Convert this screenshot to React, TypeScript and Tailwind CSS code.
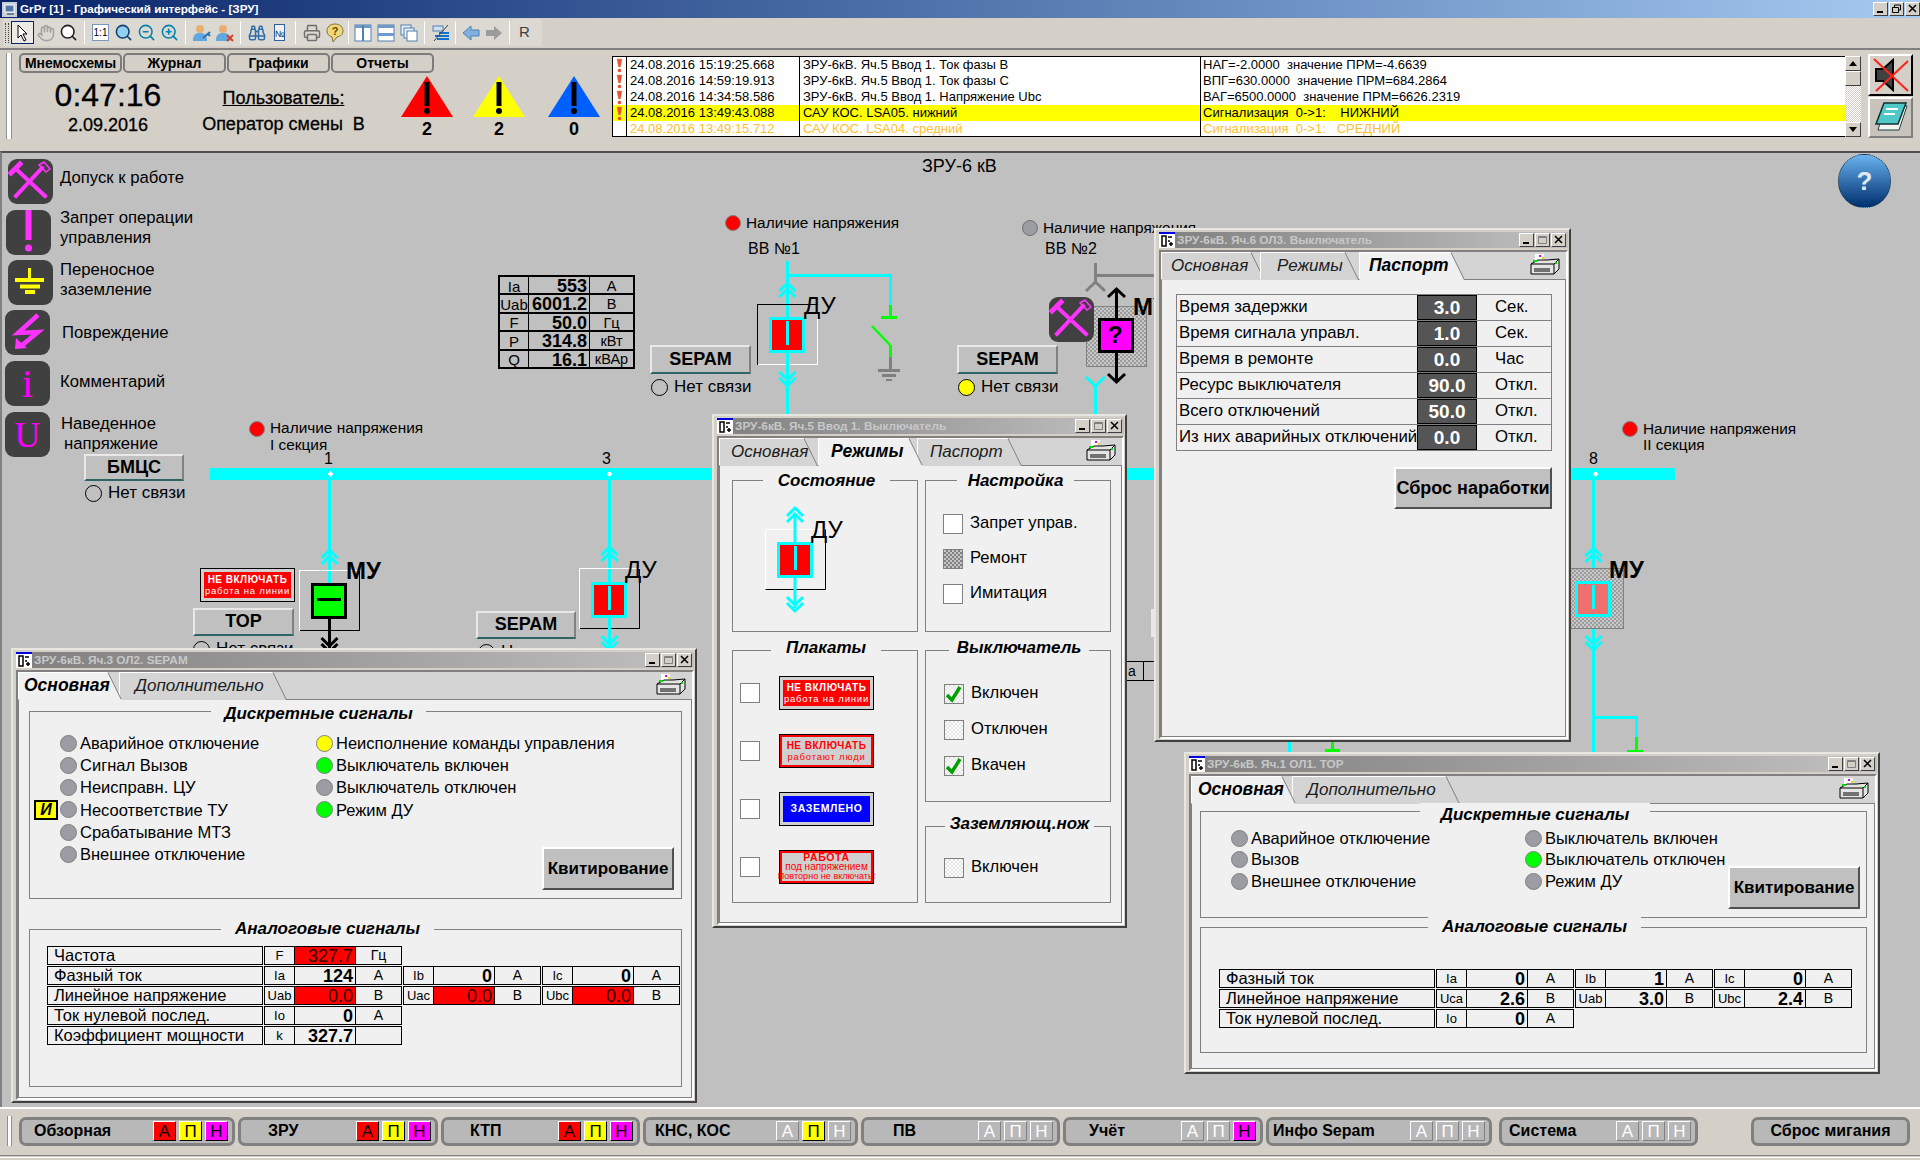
import type { ReactNode } from "react";
import { Binoculars, Hand, Printer, Search, ZoomIn, ZoomOut } from "lucide-react";

const CY = "#00ffff";

// ---------- schematic pieces (drawn in page coordinates) ----------
function Chevrons({ x, y, dir, color = CY }: { x: number; y: number; dir: "up" | "down"; color?: string }) {
  const d =
    dir === "up"
      ? `M${x - 8} ${y + 8} L${x} ${y} L${x + 8} ${y + 8} M${x - 8} ${y + 14} L${x} ${y + 6} L${x + 8} ${y + 14}`
      : `M${x - 8} ${y} L${x} ${y + 8} L${x + 8} ${y} M${x - 8} ${y + 6} L${x} ${y + 14} L${x + 8} ${y + 6}`;
  return <path d={d} fill="none" stroke={color} strokeWidth={3} />;
}

function Breaker({ x, y, fill = "#ff0000" }: { x: number; y: number; fill?: string }) {
  return (
    <g>
      <rect x={x + 1.5} y={y + 1.5} width={33} height={33} fill={fill} stroke={CY} strokeWidth={3} />
      <rect x={x + 17} y={y + 4} width={3} height={24} fill={CY} />
    </g>
  );
}

function Frame({ x, y, invert }: { x: number; y: number; invert?: boolean }) {
  const a = invert ? "#000000" : "#ffffff";
  const b = invert ? "#ffffff" : "#000000";
  return (
    <g fill="none" strokeWidth={1}>
      <path d={`M${x + 0.5} ${y + 60.5} V${y + 0.5} H${x + 60.5}`} stroke={a} />
      <path d={`M${x + 60.5} ${y + 0.5} V${y + 60.5} H${x + 0.5}`} stroke={b} />
    </g>
  );
}

function Node({ x }: { x: number }) {
  return <path d={`M${x} 471 L${x + 3} 474 L${x} 477 L${x - 3} 474 Z`} fill="#ffffff" />;
}

function Schematic() {
  return (
    <svg className="absolute left-0 top-[152px]" width={1920} height={955} viewBox="0 152 1920 955" shapeRendering="crispEdges">
      <rect x={210} y={468} width={1465} height={12} fill={CY} />

      {/* feeder 1 */}
      <rect x={328} y={480} width={3} height={103} fill={CY} />
      <g shapeRendering="auto"><Chevrons x={329.5} y={550} dir="up" /></g>
      <Frame x={299} y={570} />
      <rect x={311} y={583} width={36} height={36} fill="#000000" />
      <rect x={314} y={586} width={30} height={30} fill="#00ff00" />
      <rect x={317} y={598} width={24} height={3} fill="#000000" />
      <rect x={328} y={619} width={3} height={30} fill="#000000" />
      <g shapeRendering="auto"><Chevrons x={329.5} y={638} dir="down" color="#000000" /></g>
      <Node x={330} />

      {/* feeder 3 */}
      <rect x={608} y={480} width={3} height={102} fill={CY} />
      <g shapeRendering="auto"><Chevrons x={609.5} y={547} dir="up" /></g>
      <Frame x={579} y={568} />
      <Breaker x={591} y={582} />
      <rect x={608} y={618} width={3} height={31} fill={CY} />
      <g shapeRendering="auto"><Chevrons x={609.5} y={636} dir="down" /></g>
      <Node x={609} />

      {/* BB1 */}
      <rect x={786} y={261} width={3} height={56} fill={CY} />
      <rect x={786} y={274} width={106} height={3} fill={CY} />
      <rect x={889} y={274} width={3} height={32} fill={CY} />
      <rect x={889} y={305} width={3} height={12} fill="#00ff00" />
      <rect x={881} y={316} width={16} height={3} fill="#00ff00" />
      <path d="M872 326 L890 345" stroke="#00ff00" strokeWidth={2.5} shapeRendering="auto" />
      <rect x={889} y={345} width={3} height={12} fill="#00ff00" />
      <rect x={889} y={357} width={3} height={12} fill="#808080" />
      <rect x={878} y={369} width={22} height={3} fill="#808080" />
      <rect x={882} y={374} width={14} height={3} fill="#808080" />
      <rect x={886} y={379} width={6} height={2} fill="#808080" />
      <g shapeRendering="auto"><Chevrons x={787.5} y={283} dir="up" /></g>
      <Frame x={757} y={304} invert />
      <Breaker x={769} y={317} />
      <rect x={786} y={353} width={3} height={61} fill={CY} />
      <g shapeRendering="auto"><Chevrons x={787.5} y={372} dir="down" /></g>

      {/* BB2 */}
      <rect x={1094} y={263} width={3} height={21} fill="#808080" />
      <rect x={1094} y={274} width={60} height={3} fill="#808080" />
      <path d="M1086 291 L1095.5 282 L1105 291" fill="none" stroke="#808080" strokeWidth={3} shapeRendering="auto" />
      <rect x={1086} y={306} width={60} height={60} fill="url(#hatch)" stroke="#808080" />
      <rect x={1115} y={291} width={3} height={90} fill="#000000" />
      <path d="M1108 297 L1116.5 289 L1125 297 M1108 374 L1116.5 382 L1125 374" fill="none" stroke="#000000" strokeWidth={3} shapeRendering="auto" />
      <rect x={1098} y={318} width={36} height={35} fill="#000000" />
      <rect x={1101} y={321} width={30} height={29} fill="#ff00ff" />
      <path d="M1086 377 L1095.5 386 L1105 377" fill="none" stroke={CY} strokeWidth={3} shapeRendering="auto" />
      <rect x={1094} y={386} width={3} height={28} fill={CY} />

      {/* feeder 8 */}
      <rect x={1592} y={480} width={3} height={273} fill={CY} />
      <g shapeRendering="auto"><Chevrons x={1593.5} y={548} dir="up" /></g>
      <rect x={1560} y={568} width={63} height={60} fill="url(#hatch)" stroke="#808080" />
      <Breaker x={1575} y={581} fill="#f07070" />
      <g shapeRendering="auto"><Chevrons x={1593.5} y={636} dir="down" /></g>
      <rect x={1592} y={716} width={46} height={3} fill={CY} />
      <rect x={1635} y={716} width={3} height={21} fill={CY} />
      <rect x={1635} y={737} width={3} height={14} fill="#00ff00" />
      <rect x={1627} y={750} width={16} height={3} fill="#00ff00" />
      <Node x={1595} />

      {/* what shows between the windows */}
      <rect x={1288} y={742} width={3} height={11} fill={CY} />
      <rect x={1331} y={742} width={3} height={8} fill="#00ff00" />
      <rect x={1325} y={749} width={15} height={3} fill="#00ff00" />
      <path d="M1127 661.5 H1154 M1127 680.5 H1154 M1143.5 661 V680" stroke="#000000" fill="none" />
      <text x={1128} y={676} fontSize={14} fill="#000000" shapeRendering="auto">а</text>
      <rect x={1151} y={609} width={3} height={28} fill="#e8e8e8" />

      <defs>
        <pattern id="hatch" width={4} height={4} patternUnits="userSpaceOnUse">
          <rect width={4} height={4} fill="#c8c8c8" />
          <rect width={2} height={2} fill="#9c9c9c" />
          <rect x={2} y={2} width={2} height={2} fill="#9c9c9c" />
        </pattern>
      </defs>
    </svg>
  );
}

function CrossIcon({ className }: { className: string }) {
  return (
    <div className={`absolute h-[45px] w-[45px] rounded-[9px] bg-[#404040] ${className}`}>
      <HammerSvg />
    </div>
  );
}

function HammerSvg() {
  return (
    <svg width={45} height={45} viewBox="0 0 45 45">
      <g stroke="#ff33ff" fill="none" strokeLinecap="square">
        <path d="M8 10 L37 37 M34 9 L8 37" strokeWidth={4} />
        <path d="M3 14 L12 5" strokeWidth={5} />
        <path d="M31 6 L36 3 L42 10 L38 13 Z" strokeWidth={1.5} />
      </g>
    </svg>
  );
}

// ---------- left legend ----------
function LegendIcon({ kind }: { kind: number }) {
  return (
    <div className="flex h-[45px] w-[45px] shrink-0 items-center justify-center rounded-[9px] bg-[#404040]">
      {kind === 1 && <HammerSvg />}
      {kind === 2 && (
        <svg width={45} height={45} viewBox="0 0 45 45">
          <rect x={19.5} width={6} height={30} fill="#ff33ff" />
          <circle cx={22.5} cy={38} r={3.5} fill="#ff33ff" />
        </svg>
      )}
      {kind === 3 && (
        <svg width={45} height={45} viewBox="0 0 45 45" fill="#ffff00">
          <rect x={20} y={8} width={3} height={11} />
          <rect x={7} y={18} width={29} height={4} />
          <rect x={12} y={24.5} width={20} height={4} />
          <rect x={17} y={30} width={10} height={4} />
        </svg>
      )}
      {kind === 4 && (
        <svg width={45} height={45} viewBox="0 0 45 45">
          <path d="M33 5 L13 23 L33 22 L15 37" fill="none" stroke="#ff33ff" strokeWidth={4.5} />
          <path d="M10 39 L11 28 L22 38 Z" fill="#ff33ff" />
        </svg>
      )}
      {kind === 5 && <span className="font-['Liberation_Serif',serif] text-[40px] leading-none text-[#ff00ff]">i</span>}
      {kind === 6 && <span className="font-['Liberation_Serif',serif] text-[36px] leading-none text-[#ff00ff]">U</span>}
    </div>
  );
}

function LegendRow({ kind, className, textClass, text }: { kind: number; className: string; textClass: string; text: ReactNode }) {
  return (
    <div className={`flex h-[45px] items-center ${className}`}>
      <LegendIcon kind={kind} />
      <div className={`whitespace-nowrap text-[16.7px] leading-[20px] text-black ${textClass}`}>{text}</div>
    </div>
  );
}

// ---------- small controls ----------
function Dot({ c }: { c: string }) {
  return <span className={`inline-block h-[17px] w-[17px] shrink-0 rounded-full border border-[#808080] ${c}`} />;
}

function Signal({ c, text }: { c: string; text: string }) {
  return (
    <div className="flex h-[18px] items-center gap-[3px] whitespace-nowrap text-[16.5px] text-black">
      <Dot c={c} />
      {text}
    </div>
  );
}

function CanvasButton({ className, text }: { className: string; text: string }) {
  return (
    <div className={`absolute flex items-center justify-center border-2 border-t-[#e8e8e8] border-l-[#e8e8e8] border-r-[#808080] border-b-[#2f6464] bg-[#c0c0c0] pb-[1px] text-[18px] font-bold text-black ${className}`}>
      {text}
    </div>
  );
}

function NoLink({ className, c, text = "Нет связи" }: { className: string; c: string; text?: string }) {
  return (
    <div className={`absolute flex items-center gap-[6px] whitespace-nowrap text-[17px] leading-[18px] text-black ${className}`}>
      <span className={`inline-block h-[17px] w-[17px] rounded-full border border-black ${c}`} />
      {text}
    </div>
  );
}

function Txt({ className, children }: { className: string; children: ReactNode }) {
  return <span className={`absolute whitespace-nowrap leading-[18px] text-black ${className}`}>{children}</span>;
}

function Check({ state, label }: { state: "empty" | "on" | "off" | "hatch"; label: string }) {
  const box =
    state === "empty"
      ? "bg-white"
      : state === "hatch"
        ? "bg-[repeating-conic-gradient(#808080_0_25%,#c8c8c8_0_50%)] bg-[length:4px_4px]"
        : "bg-[repeating-conic-gradient(#ffffff_0_25%,#e4e4e4_0_50%)] bg-[length:4px_4px]";
  return (
    <div className="flex h-[21px] items-center gap-[7px] whitespace-nowrap text-[16.6px] text-black">
      <span className={`relative h-[20px] w-[20px] shrink-0 border border-[#808080] ${box}`}>
        {state === "on" && (
          <svg className="absolute left-0 top-0" width={18} height={18} viewBox="0 0 18 18">
            <path d="M2 10 L7 15 L15 2" fill="none" stroke="#00a000" strokeWidth={3.5} />
          </svg>
        )}
      </span>
      {label}
    </div>
  );
}

function Placard({ kind }: { kind: number }) {
  if (kind === 1)
    return (
      <div className="flex h-[34px] w-[95px] shrink-0 border border-black bg-[#d0d0d0] p-[3px]">
        <div className="flex flex-1 flex-col items-center justify-center bg-[#ff0000] text-white">
          <span className="text-[10px] font-bold leading-[11px] tracking-[0.5px]">НЕ ВКЛЮЧАТЬ</span>
          <span className="text-[9.5px] leading-[12px] tracking-[0.8px]">работа на линии</span>
        </div>
      </div>
    );
  if (kind === 2)
    return (
      <div className="flex h-[34px] w-[95px] shrink-0 flex-col items-center justify-center border-[3px] border-[#ff0000] bg-[#d0d0d0] text-[#ff0000] outline outline-1 -outline-offset-1 outline-black">
        <span className="text-[10px] font-bold leading-[11px] tracking-[0.5px]">НЕ ВКЛЮЧАТЬ</span>
        <span className="text-[9.5px] leading-[12px] tracking-[0.8px]">работают люди</span>
      </div>
    );
  if (kind === 3)
    return (
      <div className="flex h-[34px] w-[95px] shrink-0 border border-black bg-[#d0d0d0] p-[3px]">
        <div className="flex flex-1 items-center justify-center bg-[#0000ff] text-[10.5px] font-bold tracking-[0.6px] text-white">ЗАЗЕМЛЕНО</div>
      </div>
    );
  return (
    <div className="flex h-[34px] w-[95px] shrink-0 flex-col items-center justify-center whitespace-nowrap border-[3px] border-[#ff0000] bg-[#d0d0d0] text-[#ff0000] outline outline-1 -outline-offset-1 outline-black">
      <span className="text-[10.5px] font-bold leading-[9px] tracking-[0.6px]">РАБОТА</span>
      <span className="text-[10px] leading-[9px]">под напряжением</span>
      <span className="text-[9.1px] leading-[10px]">Повторно не включать!</span>
    </div>
  );
}

function PrinterIcon() {
  return (
    <svg className="ml-auto mr-[6px] mt-[2px]" width={30} height={22} viewBox="0 0 30 22">
      <rect x={5} y={0} width={9} height={7} fill="#ffffff" />
      <path d="M1 10 L8 6 H17 L29 5 V15 L24 20 H1 Z" fill="#e4e4e4" stroke="#000000" />
      <path d="M1 10 H24 V20 M24 10 L29 5 M4 15 H20 M4 17 H20" fill="none" stroke="#000000" />
      <rect x={3} y={6} width={4} height={2} fill="#00e000" />
      <rect x={25} y={8} width={2} height={2} fill="#00e000" />
      <rect x={9} y={1} width={2} height={2} fill="#e000e0" />
      <rect x={12} y={3} width={2} height={2} fill="#e0e000" />
    </svg>
  );
}

function Tab({ label, w, pl, active, className = "" }: { label: string; w: number; pl: number; active?: boolean; className?: string }) {
  const h = 27;
  return (
    <div className={`relative h-[27px] shrink-0 ${active ? "z-10" : ""} ${className}`} style={{ width: w }}>
      <svg className="absolute left-0 top-0" width={w} height={h + 1}>
        <path d={`M0.5 ${h + 1} V0.5 H${w - 14} L${w - 1} ${h + 1}`} fill={active ? "#f0f0f0" : "#d4d4d4"} stroke="none" />
        <path d={`M0.5 ${h} V0.5 H${w - 14}`} fill="none" stroke="#ffffff" />
        <path d={`M${w - 14} 0.5 L${w - 1} ${h}`} fill="none" stroke="#808080" />
      </svg>
      <span
        className={`relative block whitespace-nowrap italic leading-[27px] ${active ? "text-[17.5px] font-bold text-black" : "text-[17px] text-[#202020]"}`}
        style={{ paddingLeft: pl }}
      >
        {label}
      </span>
    </div>
  );
}

function Win({ className, title, tabs, children }: { className: string; title: string; tabs: ReactNode; children: ReactNode }) {
  return (
    <div className={`absolute flex flex-col border-2 border-t-[#e8e6e0] border-l-[#e8e6e0] border-r-[#404040] border-b-[#404040] bg-[#d4d0c8] pb-[1px] pl-[3px] pr-[1px] pt-[2px] ${className}`}>
      <div className="flex h-[16px] shrink-0 items-center bg-gradient-to-r from-[#808080] to-[#c0c0c0] pr-[2px]">
        <svg width={16} height={16} viewBox="0 0 16 16" className="mr-[2px] shrink-0">
          <rect width={16} height={16} fill="#ffffff" />
          <rect width={16} height={2} fill="#0000e0" />
          <path d="M3 4 V14 H7 V4 Z M9 5 H13 M9 9 H11 M10 12 H14 M12 10 V14" fill="none" stroke="#000000" strokeWidth={1.5} />
        </svg>
        <span className="flex-1 truncate text-[11.8px] font-bold leading-[16px] text-[#c8c8c8]">{title}</span>
        <WinBtn kind="min" />
        <WinBtn kind="max" />
        <WinBtn kind="close" />
      </div>
      <div className="mt-[2px] flex min-h-0 flex-1 flex-col border-2 border-[#808080] border-b-[#ffffff] border-r-[#ffffff] bg-[#d4d4d4]">
        <div className="flex h-[27px] shrink-0">{tabs}</div>
        <div className="min-h-0 flex-1 border border-[#808080] bg-[#f0f0f0]">{children}</div>
      </div>
    </div>
  );
}

function WinBtn({ kind }: { kind: "min" | "max" | "close" | "restore" }) {
  return (
    <span className="ml-[1px] flex h-[14px] w-[15px] items-center justify-center border border-t-white border-l-white border-r-[#404040] border-b-[#404040] bg-[#d4d0c8]">
      <svg width={11} height={10} viewBox="0 0 11 10">
        {kind === "min" && <rect x={2} y={7} width={6} height={2} fill="#000000" />}
        {kind === "max" && <path d="M1.5 1.5 H9.5 V8.5 H1.5 Z M1.5 2.5 H9.5" fill="none" stroke="#808080" />}
        {kind === "restore" && <path d="M3.5 3 V1 H9.5 V6 H7.5 M1.5 3.5 H7.5 V8.5 H1.5 Z" fill="none" stroke="#000000" />}
        {kind === "close" && <path d="M2 1 L9 8 M9 1 L2 8" stroke="#000000" strokeWidth={1.5} />}
      </svg>
    </span>
  );
}

function Group({ className, legend, legendClass, children }: { className: string; legend: string; legendClass: string; children?: ReactNode }) {
  return (
    <div className={`relative shrink-0 border border-[#808080] ${className}`}>
      <span className={`absolute -top-[13px] whitespace-nowrap bg-[#f0f0f0] text-center text-[17px] font-bold italic leading-[24px] text-black ${legendClass}`}>{legend}</span>
      {children}
    </div>
  );
}

function Trio({ sym, val, unit, red }: { sym: string; val: string; unit: string; red?: boolean }) {
  return (
    <div className="flex h-[19px] w-[138px] shrink-0 border border-black">
      <span className="flex w-[30px] items-center justify-center border-r border-black text-[13px]">{sym}</span>
      <span className={`flex w-[61px] items-center justify-end border-r border-black pr-[2px] text-[18px] leading-none ${red ? "bg-[#ff0000] text-[#300000]" : "font-bold"}`}>{val}</span>
      <span className="flex flex-1 items-center justify-center text-[14px]">{unit}</span>
    </div>
  );
}

function SigRow({ label, children }: { label: string; children: ReactNode }) {
  return (
    <div className="flex gap-[1px]">
      <div className="flex h-[19px] w-[216px] shrink-0 items-center border border-black pl-[6px] text-[16.5px] leading-none">{label}</div>
      {children}
    </div>
  );
}

function Ack() {
  return (
    <div className="ml-auto flex h-[43px] w-[132px] shrink-0 items-center justify-center self-end border-2 border-t-white border-l-white border-r-[#505050] border-b-[#505050] bg-[#c0c0c0] text-[17px] font-bold text-black">
      Квитирование
    </div>
  );
}

// ---------- top & bottom bars ----------
function Tool({ children, selected }: { children: ReactNode; selected?: boolean }) {
  return (
    <div className={`flex h-[23px] w-[23px] shrink-0 items-center justify-center ${selected ? "border border-[#0a246a] bg-[#eceae4]" : ""}`}>
      {children}
    </div>
  );
}

const Sep = ({ className = "mx-[4px]" }: { className?: string }) => (
  <div className={`h-[23px] w-[1px] shrink-0 border-r border-white bg-[#a8a49c] ${className}`} />
);

function Person({ mark }: { mark: "key" | "x" }) {
  return (
    <svg width={20} height={20} viewBox="0 0 20 20">
      <circle cx={8} cy={6} r={4} fill="#e8b070" />
      <path d="M1 18 C1 11 4 10 8 10 C12 10 15 11 15 18 Z" fill="#60a8e0" />
      {mark === "key" ? (
        <path d="M11 15 L18 9 M16 11 L18 13" stroke="#3070b0" strokeWidth={2} fill="none" />
      ) : (
        <path d="M12 12 L18 18 M18 12 L12 18" stroke="#d04030" strokeWidth={2} fill="none" />
      )}
    </svg>
  );
}

function Toolbar() {
  return (
    <div className="flex h-[30px] shrink-0 items-start bg-[#d4d0c8] pl-[3px] pt-[1px]">
      <div className="flex h-[27px] w-[539px] items-center rounded-[2px] bg-[#dcd9d2] pl-[2px]">
        <div className="mr-[2px] h-[20px] w-[4px] border-x border-dotted border-[#404040]" />
        <Tool selected>
          <svg width={16} height={18} viewBox="0 0 16 18"><path d="M3 1 V14 L6 11 L9 17 L11 16 L8 10 H12 Z" fill="#ffffff" stroke="#000000" /></svg>
        </Tool>
        <Tool><Hand size={18} color="#a0a0a0" /></Tool>
        <Tool><Search size={19} color="#202020" fill="#ffffff" /></Tool>
        <Sep />
        <Tool><span className="border border-[#7898c0] bg-white px-[1px] text-[10px] leading-[15px] text-black">1:1</span></Tool>
        <Tool><Search size={19} color="#104070" fill="#90d0f0" /></Tool>
        <Tool><ZoomOut size={19} color="#0080b0" /></Tool>
        <Tool><ZoomIn size={19} color="#0080b0" /></Tool>
        <Sep />
        <Tool><Person mark="key" /></Tool>
        <Tool><Person mark="x" /></Tool>
        <Sep />
        <Tool><Binoculars size={18} color="#2f6ea8" /></Tool>
        <Tool><span className="border border-[#3060a0] bg-[#f0f0f0] pt-[3px] text-[9px] leading-[12px] text-[#103060]">№</span></Tool>
        <Sep />
        <Tool><Printer size={18} color="#707070" /></Tool>
        <Tool>
          <svg width={18} height={20} viewBox="0 0 18 20">
            <path d="M9 1 C4 1 1 4 1 8 C1 11 3 13 6 14 L7 19 L11 14 C15 13 17 11 17 8 C17 4 14 1 9 1 Z" fill="#f0d878" stroke="#807040" />
            <text x={9} y={12} textAnchor="middle" fontSize={11} fontWeight={700} fill="#604810">?</text>
          </svg>
        </Tool>
        <Sep className="mx-[2px]" />
        <Tool><svg width={18} height={18} viewBox="0 0 18 18"><rect x={1} y={1} width={16} height={16} fill="#ffffff" stroke="#5080b0" /><rect x={1} y={1} width={16} height={3} fill="#7098c8" /><path d="M9 1 V17" stroke="#5080b0" strokeWidth={2} /></svg></Tool>
        <Tool><svg width={18} height={18} viewBox="0 0 18 18"><rect x={1} y={1} width={16} height={16} fill="#ffffff" stroke="#5080b0" /><rect x={1} y={1} width={16} height={3} fill="#7098c8" /><rect x={1} y={9} width={16} height={3} fill="#7098c8" /></svg></Tool>
        <Tool><svg width={18} height={18} viewBox="0 0 18 18"><rect x={1} y={1} width={10} height={10} fill="#e8f0f8" stroke="#5080b0" /><rect x={4} y={4} width={10} height={10} fill="#e8f0f8" stroke="#5080b0" /><rect x={7} y={7} width={10} height={10} fill="#ffffff" stroke="#5080b0" /></svg></Tool>
        <Sep />
        <Tool><svg width={18} height={18} viewBox="0 0 18 18"><rect x={1} y={2} width={10} height={5} fill="#d0e0f0" stroke="#5080b0" /><path d="M3 12 H17 M5 15 H17 M7 9 H17" stroke="#1070d0" strokeWidth={2} /><path d="M2 17 L16 1" stroke="#404040" /></svg></Tool>
        <Sep className="mx-[3px]" />
        <Tool><svg width={18} height={18} viewBox="0 0 18 18"><path d="M1 9 L9 2 V6 H17 V12 H9 V16 Z" fill="#7fb0e0" stroke="#5080b0" /></svg></Tool>
        <Tool><svg width={18} height={18} viewBox="0 0 18 18"><path d="M17 9 L9 2 V6 H1 V12 H9 V16 Z" fill="#9c9c9c" /></svg></Tool>
        <Sep className="mx-[3.5px]" />
        <Tool><span className="text-[15px] text-[#404040]">R</span></Tool>
      </div>
    </div>
  );
}

function NavBtn({ text }: { text: string }) {
  return (
    <div className="flex h-[20px] w-[103px] items-center justify-center rounded-[5px] border-2 border-[#7c7c7c] bg-[#d4d0c8] text-[14px] font-bold text-black">
      {text}
    </div>
  );
}

function Triangle({ c, n, className }: { c: string; n: number; className?: string }) {
  return (
    <div className={`flex w-[52px] shrink-0 flex-col items-center ${className ?? ""}`}>
      <svg width={52} height={41} viewBox="0 0 52 41">
        <path d="M26 0 L52 41 H0 Z" fill={c} />
        <rect x={23.5} y={6} width={5} height={24} fill="#000000" />
        <circle cx={26} cy={35} r={3} fill="#000000" />
      </svg>
      <span className="mt-[2px] text-[18px] font-bold leading-[20px] text-black">{n}</span>
    </div>
  );
}

function Bang() {
  return (
    <svg width={7} height={15} viewBox="0 0 7 15" className="mx-auto">
      <path d="M1 1 H6 L4.5 9 H2.5 Z" fill="#e85030" stroke="#c89070" strokeWidth={0.5} />
      <circle cx={3.5} cy={12.5} r={1.8} fill="#e85030" />
    </svg>
  );
}

const alarms = [
  { t: "24.08.2016 15:19:25.668", m: "ЗРУ-6кВ. Яч.5 Ввод 1. Ток фазы В", v: "НАГ=-2.0000  значение ПРМ=-4.6639", kind: "plain" },
  { t: "24.08.2016 14:59:19.913", m: "ЗРУ-6кВ. Яч.5 Ввод 1. Ток фазы С", v: "ВПГ=630.0000  значение ПРМ=684.2864", kind: "plain" },
  { t: "24.08.2016 14:34:58.586", m: "ЗРУ-6кВ. Яч.5 Ввод 1. Напряжение Ubc", v: "ВАГ=6500.0000  значение ПРМ=6626.2319", kind: "plain" },
  { t: "24.08.2016 13:49:43.088", m: "САУ КОС. LSA05. нижний", v: "Сигнализация  0->1:    НИЖНИЙ", kind: "hot" },
  { t: "24.08.2016 13:49:15.712", m: "САУ КОС. LSA04. средний", v: "Сигнализация  0->1:   СРЕДНИЙ", kind: "old" },
];

function AlarmTable() {
  return (
    <div className="h-[81px] w-[1233px] shrink-0 border-y border-l border-black bg-white text-[13px] leading-[16px]">
      {alarms.map((a) => (
        <div
          key={a.t}
          className={`grid h-[16px] grid-cols-[14px_173px_401px_1fr] whitespace-pre ${a.kind === "hot" ? "bg-[#ffff00] text-black" : a.kind === "old" ? "text-[#ffc030]" : "text-black"}`}
        >
          <div className="border-r border-black pt-[1px]">{a.kind !== "old" && <Bang />}</div>
          <div className="border-r border-black pl-[3px]">{a.t}</div>
          <div className="border-r border-black pl-[3px]">{a.m}</div>
          <div className="pl-[2px]">{a.v}</div>
        </div>
      ))}
    </div>
  );
}

function Scrollbar() {
  const btn = "flex h-[15px] w-[16px] shrink-0 items-center justify-center border border-t-white border-l-white border-r-[#404040] border-b-[#404040] bg-[#d4d0c8]";
  return (
    <div className="flex h-[81px] w-[16px] shrink-0 flex-col bg-[repeating-conic-gradient(#ffffff_0_25%,#d4d0c8_0_50%)] bg-[length:2px_2px]">
      <div className={btn}><svg width={8} height={5}><path d="M4 0 L8 5 H0 Z" /></svg></div>
      <div className={btn} />
      <div className="flex-1" />
      <div className={btn}><svg width={8} height={5}><path d="M0 0 H8 L4 5 Z" /></svg></div>
    </div>
  );
}

function HeaderPanel() {
  const heavy = "[-webkit-text-stroke:0.3px_#000000]";
  return (
    <div className="flex h-[103px] shrink-0 border-t-2 border-t-[#808080] bg-[#d4d0c8]">
      <div className="ml-[6px] mt-[3px] h-[86px] w-[6px] shrink-0 border-x border-[#909090] bg-white" />
      <div className="ml-[7px] flex w-[593px] shrink-0 flex-col">
        <div className="mt-[3px] flex gap-[1px]">
          <NavBtn text="Мнемосхемы" />
          <NavBtn text="Журнал" />
          <NavBtn text="Графики" />
          <NavBtn text="Отчеты" />
        </div>
        <div className="mt-[3px] flex items-start">
          <div className={`w-[178px] shrink-0 text-center text-black ${heavy}`}>
            <div className="mt-[4px] text-[32px] leading-[30px]">0:47:16</div>
            <div className="mt-[5px] text-[18px] leading-[20px]">2.09.2016</div>
          </div>
          <div className={`w-[173px] shrink-0 text-center text-black ${heavy}`}>
            <div className="mt-[12px] text-[18px] leading-[20px] underline">Пользователь:</div>
            <div className="mt-[6px] whitespace-pre text-[18px] leading-[20px]">Оператор смены  В</div>
          </div>
          <Triangle c="#ff0000" n={2} className="ml-[31px]" />
          <Triangle c="#ffff00" n={2} className="ml-[20px]" />
          <Triangle c="#0060ff" n={0} className="ml-[23px]" />
        </div>
      </div>
      <div className="mt-[6px] flex">
        <AlarmTable />
        <Scrollbar />
        <div className="-mt-[2px] ml-[7px] flex w-[45px] flex-col gap-[1px]">
          <div className="flex h-[42px] items-center justify-center border-2 border-t-white border-l-white border-r-black border-b-black bg-[#d4d0c8]">
            <svg width={38} height={36} viewBox="0 0 38 36">
              <path d="M4 12 H11 L21 3 V33 L11 24 H4 Z" fill="#404040" stroke="#000000" strokeWidth={2} />
              <path d="M2 2 L36 34 M36 4 L4 34" stroke="#ff2020" strokeWidth={2} />
            </svg>
          </div>
          <div className="flex h-[41px] items-center justify-center border-2 border-t-white border-l-white border-r-[#808080] border-b-[#808080] bg-[#c8c4bc]">
            <svg width={36} height={34} viewBox="0 0 36 34">
              <path d="M12 5 H34 L26 29 H5 Z" fill="#f4f4f4" stroke="#204040" />
              <path d="M11 2 H33 L25 23 H3 Z" fill="#50c8c8" stroke="#103030" strokeWidth={1.5} />
              <path d="M13 8 H25 M11 13 H22" stroke="#ffffff" strokeWidth={2} />
            </svg>
          </div>
        </div>
      </div>
    </div>
  );
}

function Badge({ t, c }: { t: string; c?: string }) {
  return (
    <span
      className={`flex h-[20px] w-[23px] items-center justify-center border border-t-white border-l-white text-[17px] leading-none ${
        c ? `border-r-black border-b-black text-black ${c}` : "border-r-[#808080] border-b-[#808080] text-white"
      }`}
    >
      {t}
    </span>
  );
}

function Section({ text, className, a, p, n }: { text: string; className: string; a?: boolean; p?: boolean; n?: boolean }) {
  return (
    <div className={`flex h-[29px] shrink-0 items-center rounded-[7px] border-[3px] border-[#808080] bg-[#b8b8b8] pr-[4px] ${className}`}>
      <span className="whitespace-nowrap text-[16px] font-bold leading-none text-black">{text}</span>
      <div className="ml-auto flex gap-[3px]">
        <Badge t="А" c={a ? "bg-[#ff0000]" : undefined} />
        <Badge t="П" c={p ? "bg-[#ffff00]" : undefined} />
        <Badge t="Н" c={n ? "bg-[#ff00ff]" : undefined} />
      </div>
    </div>
  );
}

function Footer() {
  return (
    <div className="h-[53px] shrink-0 border-t-2 border-t-white bg-[#d4d0c8]">
      <div className="mt-[7px] flex h-[30px] items-center pl-[7px]">
        <div className="mr-[7px] h-[30px] w-[5px] shrink-0 border-x border-[#909090] bg-white" />
        <div className="flex gap-[3px]">
          <Section text="Обзорная" className="w-[216px] pl-[12px]" a p n />
          <Section text="ЗРУ" className="w-[200px] pl-[27px]" a p n />
          <Section text="КТП" className="w-[199px] pl-[26px]" a p n />
          <Section text="КНС, КОС" className="w-[215px] pl-[9px]" p />
          <Section text="ПВ" className="w-[199px] pl-[29px]" />
          <Section text="Учёт" className="w-[200px] pl-[23px]" n />
          <Section text="Инфо Sepam" className="w-[226px] pl-[4px]" />
          <Section text="Система" className="ml-[4px] w-[199px] pl-[7px]" />
        </div>
        <div className="ml-[53px] flex h-[29px] w-[159px] items-center justify-center rounded-[7px] border-[3px] border-[#808080] bg-[#b8b8b8] text-[16px] font-bold text-black">
          Сброс мигания
        </div>
      </div>
      <div className="mt-[9px] h-[3px] border-y border-t-[#808080] border-b-white" />
    </div>
  );
}

// ---------- windows ----------
function WindowFeeder3() {
  return (
    <Win
      className="left-[11px] top-[648px] h-[455px] w-[686px]"
      title="ЗРУ-6кВ. Яч.3 ОЛ2. SEPAM"
      tabs={
        <>
          <Tab label="Основная" w={104} pl={6} active />
          <Tab label="Дополнительно" w={168} pl={16} className="-ml-[3px]" />
          <PrinterIcon />
        </>
      }
    >
      <div className="flex flex-col pl-[10px] pt-[11px]">
        <Group className="h-[188px] w-[653px]" legend="Дискретные сигналы" legendClass="left-[181px] w-[215px] translate-y-[3px]">
          <span className="absolute left-[4px] top-[88px] flex h-[20px] w-[24px] items-center justify-center border-2 border-black bg-[#ffff00] text-[16px] font-bold italic">И</span>
          <div className="flex h-full pb-[8px] pl-[30px] pr-[7px] pt-[22px]">
            <div className="flex w-[256px] shrink-0 flex-col gap-[4.3px]">
              <Signal c="bg-[#9c9ca4]" text="Аварийное отключение" />
              <Signal c="bg-[#9c9ca4]" text="Сигнал Вызов" />
              <Signal c="bg-[#9c9ca4]" text="Неисправн. ЦУ" />
              <Signal c="bg-[#9c9ca4]" text="Несоответствие ТУ" />
              <Signal c="bg-[#9c9ca4]" text="Срабатывание МТЗ" />
              <Signal c="bg-[#9c9ca4]" text="Внешнее отключение" />
            </div>
            <div className="flex w-[226px] shrink-0 flex-col gap-[4.3px]">
              <Signal c="bg-[#ffff00]" text="Неисполнение команды управления" />
              <Signal c="bg-[#00ff00]" text="Выключатель включен" />
              <Signal c="bg-[#9c9ca4]" text="Выключатель отключен" />
              <Signal c="bg-[#00ff00]" text="Режим ДУ" />
            </div>
            <Ack />
          </div>
        </Group>
        <Group className="mt-[30px] h-[158px] w-[653px]" legend="Аналоговые сигналы" legendClass="left-[191px] w-[213px]">
          <div className="flex flex-col gap-[1px] pl-[17px] pt-[16px]">
            <SigRow label="Частота"><Trio sym="F" val="327.7" unit="Гц" red /></SigRow>
            <SigRow label="Фазный ток">
              <Trio sym="Ia" val="124" unit="А" />
              <Trio sym="Ib" val="0" unit="А" />
              <Trio sym="Ic" val="0" unit="А" />
            </SigRow>
            <SigRow label="Линейное напряжение">
              <Trio sym="Uab" val="0.0" unit="В" red />
              <Trio sym="Uac" val="0.0" unit="В" red />
              <Trio sym="Ubc" val="0.0" unit="В" red />
            </SigRow>
            <SigRow label="Ток нулевой послед."><Trio sym="Io" val="0" unit="А" /></SigRow>
            <SigRow label="Коэффициент мощности"><Trio sym="k" val="327.7" unit="" /></SigRow>
          </div>
        </Group>
      </div>
    </Win>
  );
}

function WindowFeeder1() {
  return (
    <Win
      className="left-[1184px] top-[752px] h-[322px] w-[696px]"
      title="ЗРУ-6кВ. Яч.1 ОЛ1. ТОР"
      tabs={
        <>
          <Tab label="Основная" w={105} pl={7} active />
          <Tab label="Дополнительно" w={168} pl={15} className="-ml-[4px]" />
          <PrinterIcon />
        </>
      }
    >
      <div className="flex flex-col pl-[8px] pt-[7px]">
        <Group className="h-[107px] w-[667px]" legend="Дискретные сигналы" legendClass="left-[219px] w-[230px] translate-y-[4px]">
          <div className="flex h-full pb-[8px] pl-[30px] pr-[7px] pt-[17px]">
            <div className="flex w-[294px] shrink-0 flex-col gap-[3.5px]">
              <Signal c="bg-[#9c9ca4]" text="Аварийное отключение" />
              <Signal c="bg-[#9c9ca4]" text="Вызов" />
              <Signal c="bg-[#9c9ca4]" text="Внешнее отключение" />
            </div>
            <div className="flex w-[203px] shrink-0 flex-col gap-[3.5px]">
              <Signal c="bg-[#9c9ca4]" text="Выключатель включен" />
              <Signal c="bg-[#00ff00]" text="Выключатель отключен" />
              <Signal c="bg-[#9c9ca4]" text="Режим ДУ" />
            </div>
            <Ack />
          </div>
        </Group>
        <Group className="mt-[9px] h-[126px] w-[667px]" legend="Аналоговые сигналы" legendClass="left-[227px] w-[213px]">
          <div className="flex flex-col gap-[1px] pl-[18px] pt-[41px]">
            <SigRow label="Фазный ток">
              <Trio sym="Ia" val="0" unit="А" />
              <Trio sym="Ib" val="1" unit="А" />
              <Trio sym="Ic" val="0" unit="А" />
            </SigRow>
            <SigRow label="Линейное напряжение">
              <Trio sym="Uca" val="2.6" unit="В" />
              <Trio sym="Uab" val="3.0" unit="В" />
              <Trio sym="Ubc" val="2.4" unit="В" />
            </SigRow>
            <SigRow label="Ток нулевой послед."><Trio sym="Io" val="0" unit="А" /></SigRow>
          </div>
        </Group>
      </div>
    </Win>
  );
}

function WindowBreaker5() {
  return (
    <Win
      className="left-[712px] top-[414px] h-[514px] w-[415px]"
      title="ЗРУ-6кВ. Яч.5 Ввод 1. Выключатель"
      tabs={
        <>
          <Tab label="Основная" w={99} pl={12} />
          <Tab label="Режимы" w={105} pl={13} active />
          <Tab label="Паспорт" w={105} pl={13} className="-ml-[6px]" />
          <PrinterIcon />
        </>
      }
    >
      <div className="grid grid-cols-[186px_186px] gap-x-[7px] pl-[12px] pt-[14px]">
        <div className="flex flex-col gap-[18px]">
          <Group className="h-[152px]" legend="Состояние" legendClass="left-[30px] w-[127px] translate-y-[1px]">
            <svg width={184} height={150} viewBox="732 481 184 150">
              <path d="M764.5 589.5 V529.5 H824.5" fill="none" stroke="#ffffff" />
              <path d="M824.5 529.5 V589.5 H764.5" fill="none" stroke="#000000" />
              <rect x={792.5} y={514} width={3} height={94} fill={CY} />
              <Chevrons x={794} y={508} dir="up" />
              <Chevrons x={794} y={597} dir="down" />
              <Breaker x={776} y={542} />
              <text x={810} y={538} fontSize={24} fill="#000000">ДУ</text>
            </svg>
          </Group>
          <Group className="h-[253px]" legend="Плакаты" legendClass="left-[38px] w-[110px] -translate-y-[2px]">
            <div className="flex flex-col gap-[24px] pl-[7px] pt-[25px]">
              {[1, 2, 3, 4].map((k) => (
                <div key={k} className="flex items-center gap-[19px]">
                  <span className="h-[20px] w-[20px] shrink-0 border border-[#808080] bg-white" />
                  <Placard kind={k} />
                </div>
              ))}
            </div>
          </Group>
        </div>
        <div className="flex flex-col">
          <Group className="h-[152px]" legend="Настройка" legendClass="left-[31px] w-[117px] translate-y-[1px]">
            <div className="flex flex-col gap-[14px] pl-[17px] pt-[32px]">
              <Check state="empty" label="Запрет управ." />
              <Check state="hatch" label="Ремонт" />
              <Check state="empty" label="Имитация" />
            </div>
          </Group>
          <Group className="mt-[18px] h-[152px]" legend="Выключатель" legendClass="left-[23px] w-[140px] -translate-y-[2px]">
            <div className="flex flex-col gap-[15px] pl-[18px] pt-[32px]">
              <Check state="on" label="Включен" />
              <Check state="off" label="Отключен" />
              <Check state="on" label="Вкачен" />
            </div>
          </Group>
          <Group className="mt-[24px] h-[77px]" legend="Заземляющ.нож" legendClass="left-[19px] w-[149px] -translate-y-[2px]">
            <div className="pl-[18px] pt-[30px]">
              <Check state="off" label="Включен" />
            </div>
          </Group>
        </div>
      </div>
    </Win>
  );
}

const passport = [
  ["Время задержки", "3.0", "Сек."],
  ["Время сигнала управл.", "1.0", "Сек."],
  ["Время в ремонте", "0.0", "Час"],
  ["Ресурс выключателя", "90.0", "Откл."],
  ["Всего отключений", "50.0", "Откл."],
  ["Из них аварийных отключений", "0.0", "Откл."],
];

function WindowPassport() {
  return (
    <Win
      className="left-[1154px] top-[228px] h-[514px] w-[417px]"
      title="ЗРУ-6кВ. Яч.6 ОЛ3. Выключатель"
      tabs={
        <>
          <Tab label="Основная" w={104} pl={10} />
          <Tab label="Режимы" w={99} pl={17} className="-ml-[5px]" />
          <Tab label="Паспорт" w={106} pl={10} active />
          <PrinterIcon />
        </>
      }
    >
      <div className="flex w-[390px] flex-col items-end pl-[13px] pt-[14px]">
        <div className="w-[376px] border-t border-l border-[#808080] text-[16.8px] leading-none text-black">
          {passport.map(([name, val, unit]) => (
            <div key={name} className="grid h-[26px] grid-cols-[240px_60px_1fr] items-stretch border-b border-r border-[#808080]">
              <span className="flex items-center whitespace-nowrap pl-[2px]">{name}</span>
              <span className="flex items-center justify-center bg-[#555555] text-[19px] font-bold text-white outline outline-1 -outline-offset-1 outline-black">{val}</span>
              <span className="flex items-center pl-[18px]">{unit}</span>
            </div>
          ))}
        </div>
        <div className="mt-[16px] flex h-[42px] w-[158px] items-center justify-center border-2 border-t-white border-l-white border-r-[#505050] border-b-[#505050] bg-[#c0c0c0] text-[18px] font-bold text-black">
          Сброс наработки
        </div>
      </div>
    </Win>
  );
}

function MiniMeter() {
  const rows = [
    ["Ia", "553", "А"],
    ["Uab", "6001.2", "В"],
    ["F", "50.0", "Гц"],
    ["P", "314.8", "кВт"],
    ["Q", "16.1", "кВАр"],
  ];
  return (
    <div className="absolute left-[498px] top-[275px] w-[137px] border-2 border-b-0 border-black text-black">
      {rows.map(([s, v, u]) => (
        <div key={s} className="grid h-[18.4px] grid-cols-[29px_61px_1fr] border-b-2 border-black">
          <span className="flex items-center justify-center border-r border-black text-[15px] leading-none">{s}</span>
          <span className="flex items-center justify-end border-r border-black pr-[2px] text-[18px] font-bold leading-none">{v}</span>
          <span className="flex items-center justify-center text-[14.5px] leading-none">{u}</span>
        </div>
      ))}
    </div>
  );
}

export default function App() {
  return (
    <div className="relative flex h-[1160px] w-[1920px] flex-col overflow-hidden bg-[#d4d0c8] font-['Liberation_Sans',Arial,sans-serif]">
      {/* title bar */}
      <div className="flex h-[18px] shrink-0 items-center bg-gradient-to-r from-[#0a246a] to-[#a6caf0] pl-[2px]">
        <svg width={15} height={15} viewBox="0 0 15 15" className="mr-[3px]">
          <rect width={15} height={15} fill="#c8d0dc" />
          <rect x={3} y={3} width={9} height={7} fill="#5078a8" stroke="#ffffff" />
          <rect x={5} y={11} width={7} height={2} fill="#708090" />
        </svg>
        <span className="flex-1 text-[11.7px] font-bold text-white">GrPr [1] - Графический интерфейс - [ЗРУ]</span>
        <span className="flex">
          <WinBtn kind="min" />
          <WinBtn kind="restore" />
          <WinBtn kind="close" />
        </span>
      </div>
      <Toolbar />
      <HeaderPanel />

      {/* canvas */}
      <main className="flex-1 border-t-2 border-l-2 border-t-[#505050] border-l-[#808080] bg-[#c0c0c0]" />
      <Footer />

      <Schematic />

      <span className="absolute left-[922px] top-[156px] text-[18px] leading-[20px] text-black">ЗРУ-6 кВ</span>
      <div className="absolute left-[1838px] top-[154px] flex h-[54px] w-[53px] items-center justify-center rounded-full border border-dotted border-[#303030] bg-gradient-to-b from-[#6ab4f0] to-[#00306e] text-[26px] font-bold text-[#e0e8f0]">?</div>

      {/* legend */}
      <div className="absolute left-0 top-[159px] flex flex-col">
        <LegendRow kind={1} className="ml-[8px] gap-[7px]" textClass="mb-[7px]" text="Допуск к работе" />
        <LegendRow kind={2} className="ml-[6px] mt-[6px] gap-[9px]" textClass="mb-[9px]" text={<>Запрет операции<br />управления</>} />
        <LegendRow kind={3} className="ml-[8px] mt-[5px] gap-[7px]" textClass="mb-[6px]" text={<>Переносное<br />заземление</>} />
        <LegendRow kind={4} className="ml-[5px] mt-[5px] gap-[12px]" textClass="mb-0" text="Повреждение" />
        <LegendRow kind={5} className="ml-[5px] mt-[6px] gap-[10px]" textClass="mb-[3px]" text="Комментарий" />
        <LegendRow kind={6} className="ml-[5px] mt-[6px] gap-[11px]" textClass="mb-[2px]" text={<>Наведенное<br /><span className="pl-[3px]">напряжение</span></>} />
      </div>

      <CanvasButton className="left-[84px] top-[454px] h-[27px] w-[100px]" text="БМЦС" />
      <NoLink className="left-[85px] top-[484px]" c="bg-transparent" />

      <Txt className="left-[249px] top-[421px] h-[16px] w-[16px] rounded-full border border-[#808080] bg-[#ff0000]"> </Txt>
      <Txt className="left-[270px] top-[419px] text-[15.4px]">Наличие напряжения</Txt>
      <Txt className="left-[270px] top-[436px] text-[15.4px]">I секция</Txt>
      <Txt className="left-[324px] top-[450px] text-[16px]">1</Txt>
      <Txt className="left-[602px] top-[450px] text-[16px]">3</Txt>
      <Txt className="left-[1589px] top-[450px] text-[16px]">8</Txt>

      <Txt className="left-[725px] top-[215px] h-[16px] w-[16px] rounded-full border border-[#808080] bg-[#ff0000]"> </Txt>
      <Txt className="left-[746px] top-[214px] text-[15.4px]">Наличие напряжения</Txt>
      <Txt className="left-[748px] top-[240px] text-[16px]">ВВ №1</Txt>
      <Txt className="left-[1022px] top-[220px] h-[16px] w-[16px] rounded-full border border-[#707070] bg-[#9c9ca4]"> </Txt>
      <Txt className="left-[1043px] top-[219px] text-[15.4px]">Наличие напряжения</Txt>
      <Txt className="left-[1045px] top-[240px] text-[16px]">ВВ №2</Txt>

      <MiniMeter />

      <CanvasButton className="left-[650px] top-[345px] h-[29px] w-[101px]" text="SEPAM" />
      <NoLink className="left-[651px] top-[378px]" c="bg-transparent" />
      <CanvasButton className="left-[957px] top-[345px] h-[29px] w-[101px]" text="SEPAM" />
      <NoLink className="left-[958px] top-[378px]" c="bg-[#ffff00]" />
      <CanvasButton className="left-[476px] top-[611px] h-[28px] w-[100px]" text="SEPAM" />
      <NoLink className="left-[478px] top-[643px]" c="bg-transparent" />
      <CanvasButton className="left-[193px] top-[608px] h-[28px] w-[101px]" text="ТОР" />
      <NoLink className="left-[193px] top-[640px]" c="bg-transparent" />

      <div className="absolute left-[200px] top-[568px]"><Placard kind={1} /></div>

      <Txt className="left-[346px] top-[562px] text-[24px] font-bold">МУ</Txt>
      <Txt className="left-[625px] top-[561px] text-[24px]">ДУ</Txt>
      <Txt className="left-[804px] top-[297px] text-[24px]">ДУ</Txt>
      <Txt className="left-[1133px] top-[298px] text-[24px] font-bold">МУ</Txt>
      <Txt className="left-[1609px] top-[561px] text-[24px] font-bold">МУ</Txt>
      <Txt className="left-[1108px] top-[326px] text-[24px] font-bold">?</Txt>
      <CrossIcon className="left-[1049px] top-[297px]" />

      <Txt className="left-[1622px] top-[421px] h-[16px] w-[16px] rounded-full border border-[#808080] bg-[#ff0000]"> </Txt>
      <Txt className="left-[1643px] top-[420px] text-[15.4px]">Наличие напряжения</Txt>
      <Txt className="left-[1643px] top-[436px] text-[15.4px]">II секция</Txt>

      <WindowFeeder3 />
      <WindowBreaker5 />
      <WindowPassport />
      <WindowFeeder1 />
    </div>
  );
}
